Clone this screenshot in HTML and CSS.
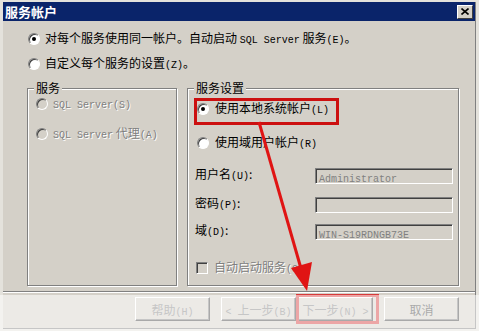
FILE: index.html
```html
<!DOCTYPE html>
<html lang="zh-CN">

<head>
    <meta charset="UTF-8">
    <link rel="stylesheet" href="styles.css">
    <title>服务帐户</title>
</head>

<body>
    <div class="dialog">
        <div class="titlebar">
            <span class="title">服务帐户</span>
            <span class="close-btn">
                <svg width="8" height="7" viewBox="0 0 8 7">
                    <path d="M0.5 0.5 L7.5 6.5 M7.5 0.5 L0.5 6.5" stroke="#000" stroke-width="1.6" />
                </svg>
            </span>
        </div>

        <div class="content">
            <div class="option top-opt">
                <span class="radio on"></span>
                <span>对每个服务使用同一帐户。自动启动 <span class="en">SQL Server</span> 服务<span class="en">(E)</span>。</span>
            </div>
            <div class="option top-opt second">
                <span class="radio"></span>
                <span>自定义每个服务的设置<span class="en">(Z)</span>。</span>
            </div>

            <div class="groups">
                <div class="group services">
                    <span class="legend">服务</span>
                    <div class="option dim">
                        <span class="radio off"></span>
                        <span><span class="en">SQL Server(S)</span></span>
                    </div>
                    <div class="option dim next-row">
                        <span class="radio off"></span>
                        <span><span class="en">SQL Server</span> 代理<span class="en">(A)</span></span>
                    </div>
                </div>

                <div class="group settings">
                    <span class="legend">服务设置</span>
                    <div class="option">
                        <span class="radio on"></span>
                        <span>使用本地系统帐户<span class="en">(L)</span></span>
                    </div>
                    <div class="option domain-opt">
                        <span class="radio"></span>
                        <span>使用域用户帐户<span class="en">(R)</span></span>
                    </div>

                    <div class="field first-field">
                        <label>用户名<span class="en">(U)</span>:</label>
                        <div class="textbox"><span class="en">Administrator</span></div>
                    </div>
                    <div class="field pass-field">
                        <label>密码<span class="en">(P)</span>:</label>
                        <div class="textbox"></div>
                    </div>
                    <div class="field domain-field">
                        <label>域<span class="en">(D)</span>:</label>
                        <div class="textbox"><span class="en">WIN-S19RDNGB73E</span></div>
                    </div>

                    <div class="option dim check-row">
                        <span class="checkbox"></span>
                        <span>自动启动服务<span class="en">(O)</span></span>
                    </div>
                </div>
            </div>
        </div>

        <div class="separator"></div>

        <div class="footer">
            <button type="button">帮助<span class="en">(H)</span></button>
            <button type="button" class="back-btn"><span class="en">&lt; </span>上一步<span class="en">(B)</span></button>
            <button type="button" class="next-btn">下一步<span class="en">(N) &gt;</span></button>
            <button type="button" class="cancel-btn">取消</button>
        </div>
    </div>

    <!-- annotations drawn on top of the screenshot -->
    <div class="mark mark-local"></div>
    <div class="mark mark-next"></div>
    <svg class="arrow" width="479" height="331" viewBox="0 0 479 331">
        <line x1="259" y1="122" x2="302" y2="272" stroke="#e01414" stroke-width="3" />
        <polygon points="307,291 291,268 312,262" fill="#e01414" />
    </svg>
    <div class="watermark"></div>
</body>

</html>
```

FILE: styles.css
```css
body {
    margin: 0;
    width: 479px;
    height: 331px;
    overflow: hidden;
    position: relative;
    background-color: #e4e2dc;
    font-family: "Noto Sans CJK SC", sans-serif;
    font-size: 12px;
    line-height: 14px;
    color: #000;
}

.en {
    font-family: "Liberation Mono", monospace;
    font-size: 10px;
}

.dialog {
    margin: 2px 3px 0 3px;
    width: 472px;
    height: 326px;
    background-color: #d4d0c8;
    border-right: 1px solid #808080;
    border-bottom: 1px solid #808080;
    display: flex;
    flex-direction: column;
}

.titlebar {
    height: 19px;
    background-color: #0a246a;
    display: flex;
    align-items: center;
    justify-content: space-between;
    padding: 0 2px 0 2px;
}

.title {
    color: #fff;
    font-weight: 700;
    font-size: 13px;
}

.close-btn {
    width: 14px;
    height: 12px;
    background-color: #d4d0c8;
    border: 1px solid;
    border-color: #fff #404040 #404040 #fff;
    display: flex;
    align-items: center;
    justify-content: center;
}

.content {
    padding: 11px 0 0 25px;
}

.option {
    display: flex;
    align-items: center;
    height: 14px;
    gap: 5px;
    white-space: nowrap;
}

.top-opt.second {
    margin-top: 11px;
}

.radio {
    width: 10px;
    height: 10px;
    border-radius: 50%;
    background-color: #fff;
    border: 1px solid;
    border-color: #808080 #fff #fff #808080;
    box-shadow: inset 1px 1px 0 #404040;
    position: relative;
    flex-shrink: 0;
}

.radio.on::after {
    content: "";
    position: absolute;
    left: 3px;
    top: 3px;
    width: 4px;
    height: 4px;
    border-radius: 50%;
    background-color: #000;
}

.radio.off {
    background-color: #d4d0c8;
}

.groups {
    display: flex;
    margin-top: 17px;
    gap: 11px;
}

.group {
    position: relative;
    border: 1px solid #808080;
    box-shadow: 1px 1px 0 #fff, inset 1px 1px 0 #fff;
    margin-left: -1px;
}

.legend {
    position: absolute;
    top: -8px;
    left: 6px;
    padding: 0 2px;
    background-color: #d4d0c8;
}

.services {
    width: 150px;
    padding: 8px 0 0 8px;
    box-sizing: border-box;
    height: 198px;
}

.services .next-row {
    margin-top: 16px;
}

.dim {
    color: #808080;
    text-shadow: 1px 1px 0 #fff;
}

.settings {
    width: 272px;
    height: 198px;
    box-sizing: border-box;
    padding: 13px 0 0 9px;
}

.settings .option {
    gap: 6px;
}

.domain-opt {
    margin-top: 20px;
}

.field {
    display: flex;
    align-items: flex-start;
}

.field label {
    width: 120px;
    margin-top: -1px;
    margin-left: -2px;
}

.first-field {
    margin-top: 18px;
}

.pass-field {
    margin-top: 13px;
}

.domain-field {
    margin-top: 11px;
}

.textbox {
    width: 133px;
    height: 13px;
    border: 1px solid;
    border-color: #808080 #fff #fff #808080;
    box-shadow: inset 1px 1px 0 #404040;
    padding: 1px 0 0 3px;
    color: #808080;
    line-height: 14px;
}

.check-row {
    margin-top: 21px;
    margin-left: -1px;
}

.checkbox {
    width: 10px;
    height: 10px;
    border: 1px solid;
    border-color: #808080 #fff #fff #808080;
    box-shadow: inset 1px 1px 0 #404040;
    background-color: #d4d0c8;
    flex-shrink: 0;
}

.separator {
    margin: 5px 0 0 0;
    height: 1px;
    background-color: #808080;
    border-bottom: 1px solid #fff;
}

.footer {
    display: flex;
    padding: 4px 0 0 132px;
}

button {
    width: 75px;
    height: 24px;
    background-color: #d4d0c8;
    border: 1px solid;
    border-color: #fff #404040 #404040 #fff;
    box-shadow: inset -1px -1px 0 #808080;
    font-family: "Noto Sans CJK SC", sans-serif;
    font-size: 12px;
    color: #808080;
    padding: 0;
    white-space: nowrap;
}

.back-btn {
    margin-left: 11px;
}

.next-btn {
    margin-left: 2px;
}

.cancel-btn {
    margin-left: 11px;
    color: #404040;
}

.mark {
    position: absolute;
    box-sizing: border-box;
    border: 3px solid #cc1010;
}

.mark-local {
    left: 194px;
    top: 98px;
    width: 145px;
    height: 27px;
}

.mark-next {
    left: 296px;
    top: 294px;
    width: 83px;
    height: 30px;
    border-color: #d63a3a;
}

.arrow {
    position: absolute;
    left: 0;
    top: 0;
}

.watermark {
    position: absolute;
    left: 0;
    right: 0;
    top: 295px;
    bottom: 0;
    background-color: rgba(255, 255, 255, 0.55);
}
```
